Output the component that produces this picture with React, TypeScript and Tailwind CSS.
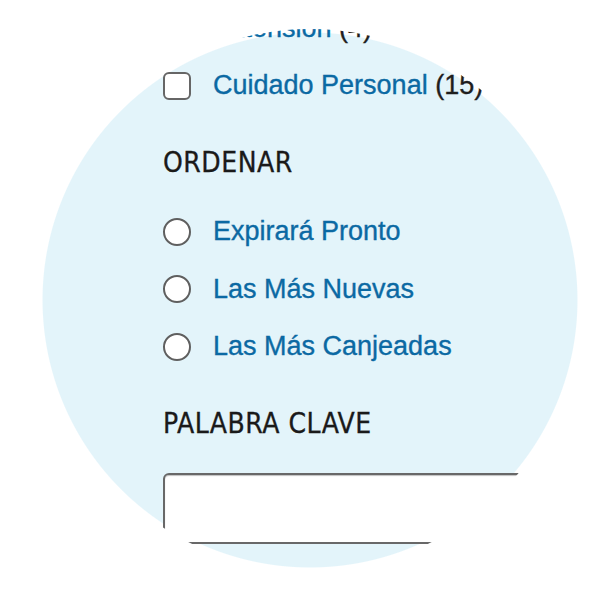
import React from 'react';

const linkFont = { fontFamily: '"Liberation Sans", Arial, sans-serif' };
const headFont = { fontFamily: '"Liberation Sans Narrow", "DejaVu Sans Condensed", sans-serif' };

const sortOptions = ['Expirará Pronto', 'Las Más Nuevas', 'Las Más Canjeadas'];

const Checkbox: React.FC<{ label: string; count: number }> = ({ label, count }) => (
  <label className="flex h-[28px] items-center gap-[22px] whitespace-nowrap">
    <span className="h-[28px] w-[28px] shrink-0 rounded-[6px] border-[2.5px] border-[#666666] bg-white" />
    <span className="text-[27px] leading-none text-[#0b69a3] [-webkit-text-stroke:0.35px]" style={linkFont}>
      {label} <span className="text-[#1e1e1e]">({count})</span>
    </span>
  </label>
);

const Radio: React.FC<{ label: string }> = ({ label }) => (
  <label className="flex h-[28px] items-center gap-[22px] whitespace-nowrap">
    <span className="h-[28px] w-[28px] shrink-0 rounded-full border-2 border-[#5f5f5f] bg-white" />
    <span className="text-[27px] leading-none text-[#0b69a3] [-webkit-text-stroke:0.35px]" style={linkFont}>
      {label}
    </span>
  </label>
);

const Heading: React.FC<{ children: React.ReactNode }> = ({ children }) => (
  <h3
    className="flex h-[28px] items-center text-[28px] leading-none tracking-[0.5px] text-[#1a1a1a] [-webkit-text-stroke:0.3px]"
    style={headFont}
  >
    {children}
  </h3>
);

export default function App() {
  return (
    <div className="h-[600px] w-[600px] overflow-hidden bg-white bg-[radial-gradient(circle_268px_at_310px_300px,#e3f4fa_99.6%,#ffffff_100%)]">
      <div className="flex h-[600px] w-[600px] flex-col pl-[163px] pt-[14px] [clip-path:circle(271px_at_310px_300px)]">
        <div className="flex h-[28px] items-center pl-[50px] whitespace-nowrap">
          <span className="text-[27px] leading-none text-[#0b69a3] [-webkit-text-stroke:0.35px]" style={linkFont}>
            Extensión <span className="text-[#1e1e1e]">(4)</span>
          </span>
        </div>

        <div className="mt-[29.5px]">
          <Checkbox label="Cuidado Personal" count={15} />
        </div>

        <div className="mt-[49.5px]">
          <Heading>ORDENAR</Heading>
        </div>

        <div className="mt-[40.5px] flex flex-col gap-[29.5px]">
          {sortOptions.map((o) => (
            <Radio key={o} label={o} />
          ))}
        </div>

        <div className="mt-[49px]">
          <Heading>PALABRA CLAVE</Heading>
        </div>

        <input
          type="text"
          aria-label="Palabra clave"
          className="mt-[35.5px] h-[71px] w-[420px] shrink-0 rounded-[6px] border-2 border-[#686868] bg-white shadow-[inset_0_1px_1px_rgba(0,0,0,0.25)] outline-none"
        />
      </div>
    </div>
  );
}
